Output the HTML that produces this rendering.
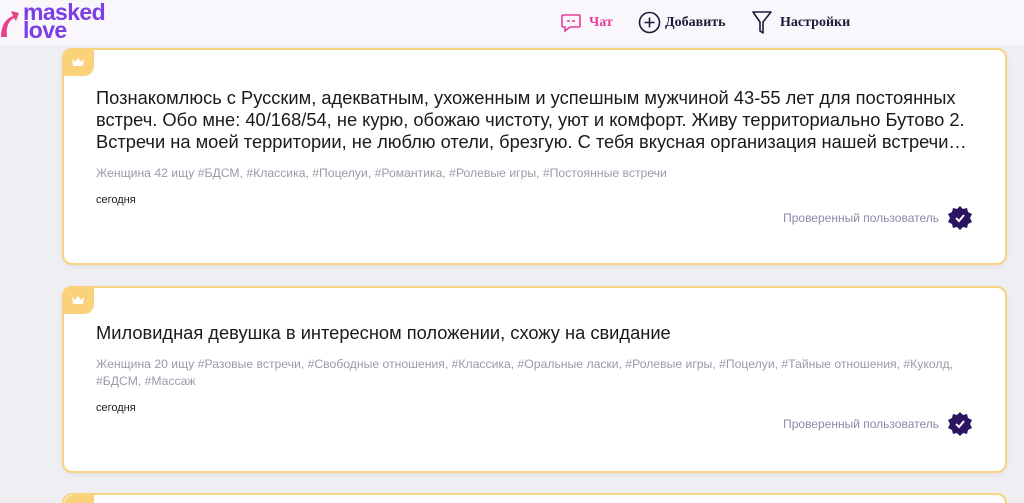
<!DOCTYPE html>
<html><head><meta charset="utf-8"><style>
*{margin:0;padding:0;box-sizing:border-box}
html,body{width:1024px;height:503px;overflow:hidden}
body{background:#eeeef3;font-family:"Liberation Sans",sans-serif;position:relative}
.hdr{position:absolute;left:0;top:0;width:1024px;height:45px;background:#f9f6fc;z-index:2}
.logo{position:absolute;left:23px;top:3px;color:#7b3fe4;font-weight:bold;font-size:23px;line-height:18px;letter-spacing:-0.6px}
.nav{position:absolute;top:15px;font-family:"Liberation Serif",serif;font-weight:bold;font-size:14px;color:#1e1a3a}
.card{position:absolute;left:62px;width:945px;background:#fff;border:2px solid #f7d57e;border-radius:10px;box-shadow:0 2px 6px rgba(0,0,0,0.05)}
.crown{position:absolute;left:-2px;top:-2px;width:32px;height:28px;background:#f9d27a;border-radius:10px 0 10px 0}
.title{position:absolute;left:32px;font-size:18.3px;line-height:22px;color:#1a1a1a;white-space:nowrap}
.tags{position:absolute;left:32px;font-size:12.2px;line-height:17px;color:#9a9aaa;width:880px}
.date{position:absolute;left:32px;font-size:11px;color:#222}
.ver{position:absolute;right:32px;font-size:12px;color:#8a8aa8;display:flex;align-items:center;gap:8px}
</style></head><body>
<div class="hdr">
<svg style="position:absolute;left:0;top:6px" width="20" height="32" viewBox="0 0 20 32"><path d="M1 31 C1 20 5 13 13 10 L11 5 L19 7 L16 15 L14 12 C8 15 6 22 7 31 Z" fill="#e8408a"/></svg>
<div class="logo">masked<br>love</div>
<svg style="position:absolute;left:560px;top:13px" width="22" height="20" viewBox="0 0 22 20"><path d="M3 2 H19 Q20 2 20 3 V13 Q20 14 19 14 H10 L5 18 V14 H3 Q2 14 2 13 V3 Q2 2 3 2Z" fill="none" stroke="#e63d9a" stroke-width="1.6"/><path d="M7 8 H10 M12 8 H15" stroke="#e63d9a" stroke-width="1.6"/></svg>
<div class="nav" style="left:589px;color:#e63d9a">Чат</div>
<svg style="position:absolute;left:638px;top:11px" width="23" height="23" viewBox="0 0 23 23"><circle cx="11.5" cy="11.5" r="10" fill="none" stroke="#1e1a3a" stroke-width="1.6"/><path d="M11.5 6.5V16.5M6.5 11.5H16.5" stroke="#1e1a3a" stroke-width="1.6"/></svg>
<div class="nav" style="left:665px">Добавить</div>
<svg style="position:absolute;left:751px;top:10px" width="22" height="25" viewBox="0 0 22 25"><path d="M2 2 H20 L12 12 V23 L9 21 V12 Z" fill="none" stroke="#1e1a3a" stroke-width="1.6" stroke-linejoin="round"/></svg>
<div class="nav" style="left:780px">Настройки</div>
</div>
<div class="card" style="top:48px;height:217px">
<div class="crown"><svg style="position:absolute;left:9px;top:9px" width="14" height="10" viewBox="0 0 14 10"><path d="M1 2 L4 5 L7 1 L10 5 L13 2 L12 9 H2Z" fill="#fff"/></svg></div>
<div class="title" style="top:37px">Познакомлюсь с Русским, адекватным, ухоженным и успешным мужчиной 43-55 лет для постоянных<br>встреч. Обо мне: 40/168/54, не курю, обожаю чистоту, уют и комфорт. Живу территориально Бутово 2.<br>Встречи на моей территории, не люблю отели, брезгую. С тебя вкусная организация нашей встречи…</div>
<div class="tags" style="top:115px">Женщина 42 ищу #БДСМ, #Классика, #Поцелуи, #Романтика, #Ролевые игры, #Постоянные встречи</div>
<div class="date" style="top:144px">сегодня</div>
<div class="ver" style="top:155px">Проверенный пользователь <svg width="26" height="26" viewBox="0 0 26 26"><path d="M13 1 L16 4 L20 3 L21 7 L25 9 L23 13 L25 17 L21 19 L20 23 L16 22 L13 25 L10 22 L6 23 L5 19 L1 17 L3 13 L1 9 L5 7 L6 3 L10 4Z" fill="#2b1460"/><path d="M9 13 L12 16 L17 10" fill="none" stroke="#fff" stroke-width="2"/></svg></div>
</div>
<div class="card" style="top:286px;height:187px">
<div class="crown"><svg style="position:absolute;left:9px;top:9px" width="14" height="10" viewBox="0 0 14 10"><path d="M1 2 L4 5 L7 1 L10 5 L13 2 L12 9 H2Z" fill="#fff"/></svg></div>
<div class="title" style="top:34px">Миловидная девушка в интересном положении, схожу на свидание</div>
<div class="tags" style="top:68px">Женщина 20 ищу #Разовые встречи, #Свободные отношения, #Классика, #Оральные ласки, #Ролевые игры, #Поцелуи, #Тайные отношения, #Куколд, #БДСМ, #Массаж</div>
<div class="date" style="top:114px">сегодня</div>
<div class="ver" style="top:123px">Проверенный пользователь <svg width="26" height="26" viewBox="0 0 26 26"><path d="M13 1 L16 4 L20 3 L21 7 L25 9 L23 13 L25 17 L21 19 L20 23 L16 22 L13 25 L10 22 L6 23 L5 19 L1 17 L3 13 L1 9 L5 7 L6 3 L10 4Z" fill="#2b1460"/><path d="M9 13 L12 16 L17 10" fill="none" stroke="#fff" stroke-width="2"/></svg></div>
</div>
<div class="card" style="top:493px;height:10px;border-bottom:none;border-radius:10px 10px 0 0;overflow:hidden;box-shadow:none"><div class="crown" style="left:0;top:0;width:30px"></div></div>
</body></html>
